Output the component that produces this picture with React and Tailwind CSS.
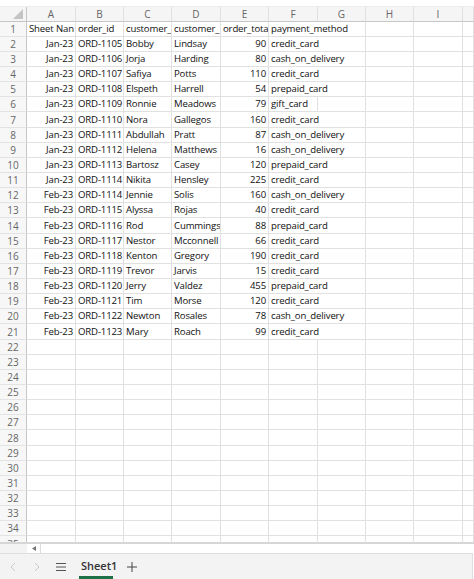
import React from "react";

const COLS = ["A", "B", "C", "D", "E", "F", "G", "H", "I", ""];

const DATA = [
  ["Jan-23", "ORD-1105", "Bobby", "Lindsay", "90", "credit_card"],
  ["Jan-23", "ORD-1106", "Jorja", "Harding", "80", "cash_on_delivery"],
  ["Jan-23", "ORD-1107", "Safiya", "Potts", "110", "credit_card"],
  ["Jan-23", "ORD-1108", "Elspeth", "Harrell", "54", "prepaid_card"],
  ["Jan-23", "ORD-1109", "Ronnie", "Meadows", "79", "gift_card"],
  ["Jan-23", "ORD-1110", "Nora", "Gallegos", "160", "credit_card"],
  ["Jan-23", "ORD-1111", "Abdullah", "Pratt", "87", "cash_on_delivery"],
  ["Jan-23", "ORD-1112", "Helena", "Matthews", "16", "cash_on_delivery"],
  ["Jan-23", "ORD-1113", "Bartosz", "Casey", "120", "prepaid_card"],
  ["Jan-23", "ORD-1114", "Nikita", "Hensley", "225", "credit_card"],
  ["Feb-23", "ORD-1114", "Jennie", "Solis", "160", "cash_on_delivery"],
  ["Feb-23", "ORD-1115", "Alyssa", "Rojas", "40", "credit_card"],
  ["Feb-23", "ORD-1116", "Rod", "Cummings", "88", "prepaid_card"],
  ["Feb-23", "ORD-1117", "Nestor", "Mcconnell", "66", "credit_card"],
  ["Feb-23", "ORD-1118", "Kenton", "Gregory", "190", "credit_card"],
  ["Feb-23", "ORD-1119", "Trevor", "Jarvis", "15", "credit_card"],
  ["Feb-23", "ORD-1120", "Jerry", "Valdez", "455", "prepaid_card"],
  ["Feb-23", "ORD-1121", "Tim", "Morse", "120", "credit_card"],
  ["Feb-23", "ORD-1122", "Newton", "Rosales", "78", "cash_on_delivery"],
  ["Feb-23", "ORD-1123", "Mary", "Roach", "99", "credit_card"],
];

const HEADER = ["Sheet Nan", "order_id", "customer_", "customer_", "order_tota", "payment_method"];

function rowCells(n) {
  let vals = null;
  if (n === 1) vals = HEADER;
  else if (n <= 21) vals = DATA[n - 2];
  const cells = [];
  if (!vals) {
    for (let i = 0; i < 10; i++) cells.push({ text: "", align: "left", span: 1 });
    return cells;
  }
  for (let i = 0; i < 5; i++) {
    const right = n > 1 && (i === 0 || i === 4);
    cells.push({ text: vals[i], align: right ? "right" : "left", span: 1 });
  }
  const pay = vals[5];
  if (pay === "gift_card") {
    cells.push({ text: pay, align: "left", span: 1 });
    cells.push({ text: "", align: "left", span: 1 });
  } else {
    cells.push({ text: pay, align: "left", span: 2 });
  }
  for (let i = 0; i < 3; i++) cells.push({ text: "", align: "left", span: 1 });
  return cells;
}

export default function App() {
  const rows = [];
  for (let n = 1; n <= 35; n++) rows.push(n);

  return (
    <div
      className="w-[474px] h-[579px] overflow-hidden bg-white flex flex-col text-black"
      style={{ fontFamily: '"Open Sans", "Liberation Sans", sans-serif' }}
    >
      <div className="h-[7px] shrink-0 bg-white border-b border-[#ececec]" />
      <div className="h-[535px] shrink-0 overflow-hidden">
        <div className="grid grid-cols-[27px_49px_48px_48px_49px_48px_49px_48px_48px_49px_1fr]">
          <div className="h-[15px] bg-[#f5f5f5] border-r border-b border-[#c6c6c6] flex items-end justify-end pr-[3px] pb-[2px]">
            <svg width="10" height="10" viewBox="0 0 10 10">
              <polygon points="10,0 10,10 0,10" fill="#c4c4c4" />
            </svg>
          </div>
          {COLS.map((c, i) => (
            <div
              key={"h" + i}
              className="h-[15px] bg-[#f5f5f5] border-r border-b border-b-[#c6c6c6] border-r-[#e0e0e0] flex items-center justify-center text-[10px] leading-none text-[#666]"
            >
              {c}
            </div>
          ))}
          {rows.map((n) => {
            const tall = n % 7 === 0;
            const h = tall ? "h-[16px]" : "h-[15px]";
            const cells = rowCells(n);
            return (
              <React.Fragment key={n}>
                <div
                  className={
                    h +
                    " bg-[#f7f7f7] border-r border-b border-r-[#c6c6c6] border-b-[#e3e3e3] flex items-center justify-center text-[10px] leading-none text-[#666]"
                  }
                >
                  {n}
                </div>
                {cells.map((c, i) => (
                  <div
                    key={i}
                    className={
                      h +
                      (c.span === 2 ? " col-span-2" : "") +
                      " border-r border-b border-[#e1e1e1] overflow-hidden whitespace-nowrap flex items-center px-[2px] text-[9.6px] tracking-[-0.15px] leading-none text-[#111]" +
                      (c.align === "right" ? " justify-end" : " justify-start")
                    }
                  >
                    {c.text}
                  </div>
                ))}
              </React.Fragment>
            );
          })}
        </div>
      </div>
      <div className="h-[11px] shrink-0 flex border-t-2 border-[#d6d6d6]">
        <div className="w-[27px] bg-[#f3f3f3]" />
        <div className="w-[14px] bg-white border-r border-[#dcdcdc] flex items-center justify-center">
          <svg width="4" height="5" viewBox="0 0 4 5">
            <polygon points="4,0 4,5 0,2.5" fill="#777" />
          </svg>
        </div>
        <div className="flex-1 bg-white" />
      </div>
      <div className="flex-1 flex">
        <div className="flex-1 bg-[#f3f3f3] border-t border-r border-[#dedede] flex items-stretch">
          <div className="w-[25px] flex items-center justify-center pl-[1px]">
            <svg width="6" height="10" viewBox="0 0 6 10" fill="none" stroke="#c9c9c9" strokeWidth="1">
              <polyline points="5,1 1,5 5,9" />
            </svg>
          </div>
          <div className="w-[24px] flex items-center justify-center">
            <svg width="6" height="10" viewBox="0 0 6 10" fill="none" stroke="#c9c9c9" strokeWidth="1">
              <polyline points="1,1 5,5 1,9" />
            </svg>
          </div>
          <div className="w-[24px] flex items-center justify-center">
            <svg width="10" height="8" viewBox="0 0 10 8" fill="none" stroke="#555" strokeWidth="1">
              <line x1="0" y1="0.5" x2="10" y2="0.5" />
              <line x1="0" y1="4" x2="10" y2="4" />
              <line x1="0" y1="7.5" x2="10" y2="7.5" />
            </svg>
          </div>
          <div className="w-[40px] ml-[6px] flex flex-col">
            <div className="flex-1 flex items-center pl-[2px] text-[11px] font-semibold text-[#333] leading-none">
              Sheet1
            </div>
            <div className="h-[3px] w-[34px] bg-[#1e7145]" />
          </div>
          <div className="w-[20px] ml-[3px] flex items-center justify-center">
            <svg width="10" height="10" viewBox="0 0 10 10" fill="none" stroke="#444" strokeWidth="1">
              <line x1="5" y1="0" x2="5" y2="10" />
              <line x1="0" y1="5" x2="10" y2="5" />
            </svg>
          </div>
        </div>
        <div className="w-[1px] bg-white" />
      </div>
    </div>
  );
}
